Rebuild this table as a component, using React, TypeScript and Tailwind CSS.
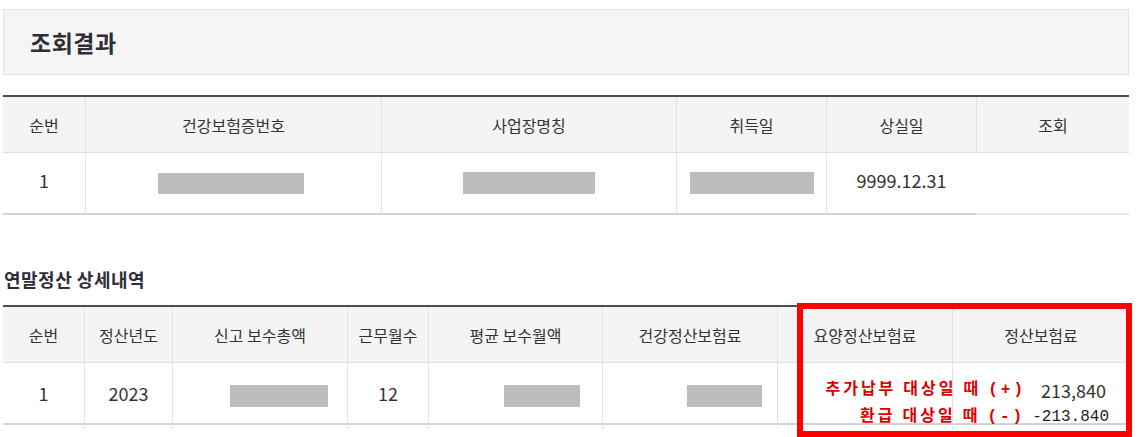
import React from "react";

const Bar = ({ w, h = 22 }: { w: number; h?: number }) => (
  <div className="bg-[#bdbdbd]" style={{ width: w, height: h }} />
);

const RedLabel = ({ words }: { words: string[] }) => (
  <span className="inline-flex gap-[7px] font-['Liberation_Mono','Noto_Sans_CJK_KR',monospace] text-[16px] font-bold tracking-[3px] text-[#dd0000]">
    {words.map((w) => (
      <span key={w}>{w}</span>
    ))}
  </span>
);

export default function App() {
  const hc =
    "flex items-center justify-center text-[16px] text-[#333] border-l border-[#e2e2e2]";
  const dc = "flex items-center justify-center text-[18px] text-[#333] border-l border-[#e2e2e2]";
  const tx = "pb-[7px]";
  return (
    <div className="relative w-[1138px] h-[437px] overflow-hidden bg-white px-[3px] pt-[9px] font-['Noto_Sans_CJK_KR',sans-serif] leading-none">
      {/* Title box */}
      <div className="flex h-[66px] w-[1126px] items-center border border-[#e3e3e3] bg-[#f5f5f5] pl-[26px]">
        <h1 className="text-[23px] font-bold tracking-[0.5px] text-[#2e2e38]">조회결과</h1>
      </div>

      {/* Table 1 */}
      <div className="mt-[20px] w-[1126px] border-t-2 border-[#4b4b57]">
        <div className="grid h-[56px] grid-cols-[82px_296px_295px_150px_150px_153px] border-b border-[#dedede] bg-[#f4f4f4]">
          <div className="flex items-center justify-center text-[16px] text-[#333]">순번</div>
          <div className={hc}>건강보험증번호</div>
          <div className={hc}>사업장명칭</div>
          <div className={hc}>취득일</div>
          <div className={hc}>상실일</div>
          <div className={hc}>조회</div>
        </div>
        <div className="grid h-[62px] grid-cols-[82px_296px_295px_150px_150px_153px]">
          <div className={`flex items-center justify-center border-b-2 border-[#d3d3d3] text-[18px] text-[#333] ${tx}`}>1</div>
          <div className={`${dc} border-b-2 border-b-[#d3d3d3]`}>
            <div className="mr-[6px]"><Bar w={146} h={21} /></div>
          </div>
          <div className={`${dc} border-b-2 border-b-[#d3d3d3]`}>
            <Bar w={132} />
          </div>
          <div className={`${dc} border-b-2 border-b-[#d3d3d3]`}>
            <Bar w={124} />
          </div>
          <div className={`${dc} border-b-2 border-b-[#d3d3d3] ${tx}`}>9999.12.31</div>
          <div className="border-b-2 border-[#e8e8e8]" />
        </div>
      </div>

      {/* Section 2 title */}
      <h2 className="mt-[52px] h-[24px] pl-[1px] text-[18px] font-bold leading-[24px] tracking-[0.5px] text-[#2e2e38]">
        연말정산 상세내역
      </h2>

      {/* Table 2 */}
      <div className="mt-[14px] w-[1126px] border-t-2 border-[#4b4b57]">
        <div className="grid h-[56px] grid-cols-[81px_88px_175px_81px_174px_175px_175px_177px] border-b border-[#dedede] bg-[#f4f4f4]">
          <div className="flex items-center justify-center text-[16px] text-[#333]">순번</div>
          <div className={hc}>정산년도</div>
          <div className={hc}>신고 보수총액</div>
          <div className={hc}>근무월수</div>
          <div className={hc}>평균 보수월액</div>
          <div className={hc}>건강정산보험료</div>
          <div className={hc}>요양정산보험료</div>
          <div className={hc}>정산보험료</div>
        </div>
        <div className="grid h-[62px] grid-cols-[81px_88px_175px_81px_174px_175px_175px_177px] border-b-2 border-[#d3d3d3]">
          <div className={`flex items-center justify-center text-[18px] text-[#333] ${tx}`}>1</div>
          <div className={`${dc} ${tx}`}>2023</div>
          <div className={`${dc} !justify-end pr-[19px]`}>
            <Bar w={98} />
          </div>
          <div className={`${dc} ${tx}`}>12</div>
          <div className={`${dc} !justify-end pr-[22px]`}>
            <Bar w={76} />
          </div>
          <div className={`${dc} !justify-end pr-[15px]`}>
            <Bar w={75} />
          </div>
          <div className="border-l border-[#e2e2e2]" />
          <div className="flex flex-col items-end border-l border-[#e2e2e2] pt-[15px] pr-[23px]">
            <div className="flex h-[24px] items-center whitespace-nowrap">
              <RedLabel words={["추가납부", "대상일", "때", "(+)"]} />
              <span className="ml-[15px] text-[18px] text-[#333]">213,840</span>
            </div>
            <div className="mr-[-3px] mt-[3px] flex h-[24px] items-center whitespace-nowrap">
              <RedLabel words={["환급", "대상일", "때", "(-)"]} />
              <span className="ml-[7px] font-['Liberation_Mono',monospace] text-[16px] text-[#222]">
                -213.840
              </span>
            </div>
          </div>
        </div>
      </div>

      {/* Red annotation box */}
      <div className="pointer-events-none absolute left-[797px] top-[303px] h-[134px] w-[335px] border-[6px] border-[#ff0000]" />
    </div>
  );
}
